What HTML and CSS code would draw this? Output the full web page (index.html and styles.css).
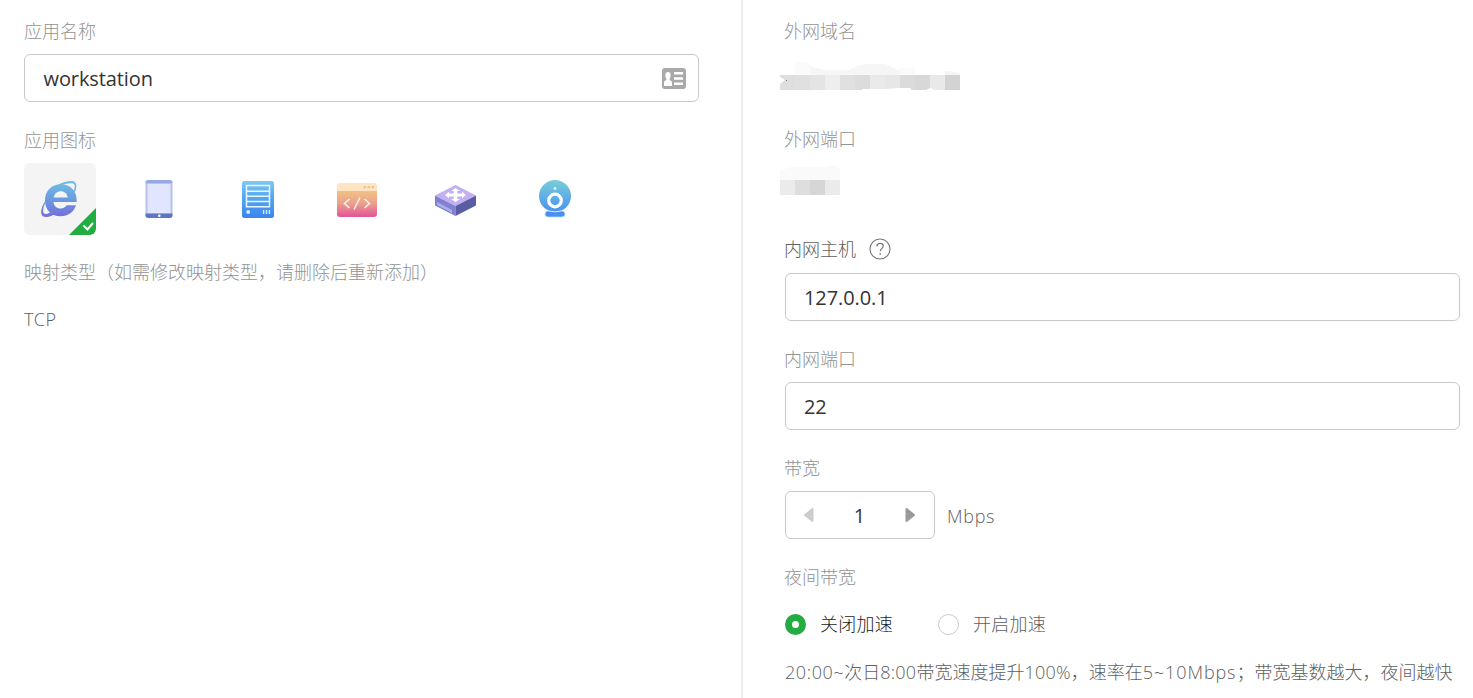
FILE: index.html
```html
<!DOCTYPE html>
<html lang="zh-CN">
<head>
<meta charset="utf-8">
<title>应用</title>
<link rel="stylesheet" href="styles.css">
</head>
<body>
<main class="page">
  <section class="col col-left">
    <div class="field name-field">
      <div class="label">应用名称</div>
      <div class="input"><span class="word">workstation</span>
        <svg class="card-icon" width="24" height="21" viewBox="0 0 24 21"><rect width="24" height="21" rx="3" fill="#a9a9a9"/><path d="M2 18v-3.500c0-2 2.500-1.500 2.500-3.500C3 9 2.500 4 6 4s3 5 1.500 7c0 2 2.500 1.500 2.500 3.500V18zM12 4h9v2.500h-9zM12 9.300h9v2.500h-9zM12 14.600h9v2.500h-9z" fill="#fff"/></svg>
      </div>
    </div>
    <div class="field icon-field">
      <div class="label">应用图标</div>
      <div class="icons">
        <div class="tile selected">
          <svg width="72" height="72" viewBox="0 0 72 72">
            <defs><linearGradient id="ie" x1="0" y1="18" x2="0" y2="54" gradientUnits="userSpaceOnUse"><stop stop-color="#6fc0e5"/><stop offset=".5" stop-color="#6b9be0"/><stop offset="1" stop-color="#756ddb"/></linearGradient></defs>
            <path fill="url(#ie)" fill-rule="evenodd" d="M52.700 39H29.500c.3 4 3.200 6.500 7 6.500 3 0 5-1.200 6.200-3.200h9.300c-2 6.600-8 11-15.500 11C27.500 53.300 21 47 21 37.500c0-9.800 6.800-16.300 15.800-16.300 10 0 16.500 7.200 15.900 17.800zM29.800 34.500h14c-.5-4-3.400-6.300-7-6.300s-6.500 2.300-7 6.300z"/>
            <path fill="url(#ie)" d="M22 32.500C28 23.500 40 17.500 48 18c5 .4 5.500 5.500 2.500 12l-1.200-1.500c2.300-5 2-8-1.300-8.300-7-.6-18 4-26 12.300zM23.500 35C17 43 15.800 50 18.500 53c3.500 2.500 9 .5 15-3.200l-4-2c-5 3.200-8.500 4-9.800 2.200-1.500-2.500.2-8 3.800-15z"/>
            <path fill="#22ac42" d="M72 45v21a6 6 0 0 1-6 6H45z"/>
            <path d="M60 63l3.500 3.500 5-6" fill="none" stroke="#fff" stroke-width="2" stroke-linecap="round"/>
          </svg>
        </div>
        <div class="tile"><svg width="72" height="72" viewBox="0 0 72 72">
          <rect x="22.500" y="17" width="27" height="38" rx="2.500" fill="#b6c2ee"/><path d="M22.500 20a3 3 0 0 1 3-3h21a3 3 0 0 1 3 3z" fill="#99a9e8"/><rect x="24.500" y="21" width="23" height="29.500" fill="#e1e5fd"/><path d="M22.500 50.500h27V52a3 3 0 0 1-3 3h-21a3 3 0 0 1-3-3z" fill="#5d75c4"/><circle cx="36.300" cy="52.700" r="1.300" fill="#fff"/></svg></div>
        <div class="tile"><svg width="72" height="72" viewBox="0 0 72 72">
          <defs><linearGradient id="sv" x2="0" y2="1"><stop stop-color="#7ec9f4"/><stop offset=".4" stop-color="#57aaf1"/><stop offset="1" stop-color="#3a84ee"/></linearGradient></defs>
          <rect x="20" y="18" width="32" height="37" rx="2.500" fill="url(#sv)"/><path d="M24.500 22.500h23v21.200h-23zM24.500 28.200h23M24.500 33.200h23M24.500 38.400h23" stroke="#e9f7ff" fill="none" stroke-width="1.500"/><circle cx="26.200" cy="49" r="1.900" fill="#d9edff"/><path d="M41.600 47v4M44.500 47v4M47.400 47v4" stroke="#d9edff" stroke-width="1.400"/></svg></div>
        <div class="tile"><svg width="72" height="72" viewBox="0 0 72 72">
          <defs><linearGradient id="cd" x2="0" y2="1"><stop stop-color="#f1c585"/><stop offset=".5" stop-color="#eba08c"/><stop offset="1" stop-color="#e35199"/></linearGradient></defs>
          <path d="M16 27h40v24a3 3 0 0 1-3 3H19a3 3 0 0 1-3-3z" fill="url(#cd)"/><path d="M16 28v-5a3 3 0 0 1 3-3h34a3 3 0 0 1 3 3v5z" fill="#ffe4c2"/><path d="M42.500 24.300h2.500M46.500 24.300H49M50.500 24.300H53" stroke="#edc07f" stroke-width="2"/><path d="M28.500 36l-5 4.500 5 4.500M39 34.500l-6 12M43.500 36l5 4.500-5 4.500" fill="none" stroke="#fff1e9" stroke-width="1.600"/></svg></div>
        <div class="tile"><svg width="72" height="72" viewBox="0 0 72 72">
          <path d="M15 32.500L35.500 22 56 32.500 35.500 43z" fill="#c2b0f2"/><path d="M15 32.500L35.500 43v10L15 42.500z" fill="#817fcf"/><path d="M35.500 43L56 32.500v10L35.500 53z" fill="#5a5ca4"/><path d="M17 39l15 8v3l-15-8z" fill="#aaaee9"/>
          <path fill="#fff" d="M35.500 25l4.500 3h-2.700v2.600H42v-1.900l4 3.300-4 3.300v-1.900h-4.700V36H40l-4.500 3-4.500-3h2.700v-2.600H29v1.900L25 32l4-3.300v1.900h4.700V28H31z"/></svg></div>
        <div class="tile"><svg width="72" height="72" viewBox="0 0 72 72">
          <defs><linearGradient id="cam" x2="0" y2="1"><stop stop-color="#78ced8"/><stop offset="1" stop-color="#4a92f2"/></linearGradient></defs>
          <circle cx="36" cy="33" r="16" fill="url(#cam)"/><circle cx="36" cy="37.500" r="6.300" fill="none" stroke="#fff" stroke-width="3.200"/><circle cx="36" cy="25.500" r="1.400" fill="#eaffff"/><path d="M29 47.800q7 2.200 14 0a3.200 3.200 0 1 1 0 6.400H29a3.200 3.200 0 1 1 0-6.400z" fill="#4790f1" stroke="#fff" stroke-width=".8"/></svg></div>
      </div>
    </div>
    <div class="field type-field">
      <div class="label">映射类型（如需修改映射类型，请删除后重新添加）</div>
      <div class="value tcp">TCP</div>
    </div>
  </section>
  <section class="col col-right">
    <div class="field domain">
      <div class="label">外网域名</div>
      <svg class="mosaic" width="180" height="28" viewBox="0 0 180 28"><path d="M15 0h9l8 5 12 3h25l8-4 10-2h18l12 6 7-2h11v7H15zM165 9l6 0 9 2v2h-15z" fill="#f6f6f6"/><path d="M15 0h9l6 5v8H15zM120 7l15-2v8h-15z" fill="#fbfbfb"/>
        <path fill="#dedede" d="M0 13h15v15H0z"/><path fill="#e0e0e0" d="M15 13h15v15H15z"/><path fill="#e4e4e4" d="M30 13h15v15H30z"/><path fill="#eee" d="M45 13h15v15H45z"/><path fill="#e0e0e0" d="M60 13h15v15H60z"/><path fill="#dcdcdc" d="M75 13h15v14H82v1h-7z"/><path fill="#eaeaea" d="M90 13h15v14H90z"/><path fill="#e7e7e7" d="M105 13h15v13l-15 1z"/><path fill="#dbdbdb" d="M120 13h15v15h-4v-2h-11z"/><path fill="#d8d8d8" d="M135 13h15v13l-4 2h-11z"/><path fill="#e9e9e9" d="M150 13h15v15h-10l-5-2z"/><path fill="#d3d3d3" d="M165 13h15v15h-15z"/><path d="M0 15l5 3-5 4z" fill="#fff"/><path fill="#777" d="M6 18h1v1H6z"/></svg>
    </div>
    <div class="field port">
      <div class="label">外网端口</div>
      <svg class="mosaic" width="60" height="30" viewBox="0 0 60 30"><path d="M0 15V6l10-4h35l8-2 7 4v11z" fill="#fafafa"/><path fill="#ebebeb" d="M0 15h15v15H0z"/><path fill="#dedede" d="M15 15h15v15H15z"/><path fill="#d6d6d6" d="M30 15h15v15H30z"/><path fill="#ebebeb" d="M45 15h15v15H45z"/></svg>
    </div>
    <div class="field host">
      <div class="label label-dark">内网主机<svg width="22" height="22" viewBox="0 0 22 22"><circle cx="11" cy="11" r="10" fill="none" stroke="#777" stroke-width="1.100"/><path d="M7.800 8.400c.2-2 1.500-3 3.300-3 1.900 0 3.100 1.100 3.100 2.700 0 2.400-3 2.600-3 5.200" fill="none" stroke="#777" stroke-width="1.200"/><circle cx="11.200" cy="15.800" r=".9" fill="#777"/></svg></div>
      <div class="input">127.0.0.1</div>
    </div>
    <div class="field"><div class="label">内网端口</div><div class="input">22</div></div>
    <div class="field">
      <div class="label">带宽</div>
      <div class="band"><div class="stepper">
        <svg width="10" height="14" viewBox="0 0 10 14"><path d="M8.500 1v12L1 7z" fill="#ccc" stroke="#ccc" stroke-width="2" stroke-linejoin="round"/></svg><span>1</span><svg width="10" height="14" viewBox="0 0 10 14"><path d="M1.500 1v12L9 7z" fill="#999" stroke="#999" stroke-width="2" stroke-linejoin="round"/></svg>
      </div><span class="value unit">Mbps</span></div>
    </div>
    <div class="field night">
      <div class="label">夜间带宽</div>
      <div class="radios"><div class="radio on"><i></i>关闭加速</div><div class="radio"><i></i>开启加速</div></div>
      <div class="note"><span class="start">20:00~</span>次日<span class="end">8:00</span>带宽速度提升<span class="end">100%</span>，速率在<span class="rate">5~10Mbps</span>；带宽基数越大，夜间越快</div>
    </div>
  </section>
</main>
</body>
</html>
```
FILE: styles.css
```css
* { box-sizing: border-box; }
body { margin: 0; background: #fff; font-family: "Open Sans", "Noto Sans CJK SC", sans-serif; font-size: 18px; font-weight: 300; color: #666; }
.page { display: grid; grid-template-columns: 741px 1fr; height: 698px; overflow: hidden; }
.col { display: flex; flex-direction: column; padding-top: 19px; }
.col-left { padding-left: 24px; padding-right: 42px; }
.col-right { border-left: 2px solid #eee; padding-left: 42px; padding-right: 13px; }
.label { height: 24px; line-height: 24px; color: #939393; white-space: nowrap; }
.col-right .label { margin-left: -1px; }
.col-right .label-dark { display: flex; align-items: center; gap: 13px; color: #606060; }
.field { margin-bottom: 26px; }
.input { margin-top: 11px; height: 48px; border: 1px solid #c9c9c9; border-radius: 6px; padding: 0 12px 0 18.500px; display: flex; align-items: center; justify-content: space-between; font-size: 20px; font-weight: 400; letter-spacing: -.1px; color: #333; }
.col-right .input { padding-left: 18px; }
.icons { display: flex; gap: 27px; margin-top: 11px; }
.tile { width: 72px; height: 72px; border-radius: 6px; overflow: hidden; }
.tile svg { display: block; }
.selected { background: #f4f4f4; }
.icon-field { margin-bottom: 25px; }
.value { line-height: 24px; color: #606060; }
.tcp { margin-top: 23px; letter-spacing: .4px; }
.mosaic { display: block; margin-left: -5px; }
.domain { height: 82px; }
.domain .mosaic { margin-top: 19px; }
.port { height: 84px; }
.port .mosaic { margin-top: 14px; }
.host .input { margin-top: 12px; }
.band { display: flex; align-items: center; gap: 12px; margin-top: 11px; }
.stepper { width: 150px; height: 48px; border: 1px solid #c9c9c9; border-radius: 6px; padding: 0 19px 0 18px; display: flex; align-items: center; justify-content: space-between; font-size: 20px; font-weight: 400; color: #333; }
.unit { letter-spacing: .7px; padding-top: 1px; }
.radios { display: flex; gap: 45px; margin-top: 23px; }
.radio { display: flex; align-items: center; gap: 14px; height: 24px; line-height: 24px; letter-spacing: .25px; color: #606060; }
.radio i { width: 21px; height: 21px; border: 1px solid #c9c9c9; border-radius: 50%; }
.radio.on { color: #222; }
.radio.on i { border: 7.500px solid #22ac42; }
.note { margin-top: 24px; line-height: 24px; white-space: nowrap; color: #606060; }
.note .start { letter-spacing: .6px; }
.note .end { letter-spacing: .25px; }
.note .rate { letter-spacing: .9px; }
```
